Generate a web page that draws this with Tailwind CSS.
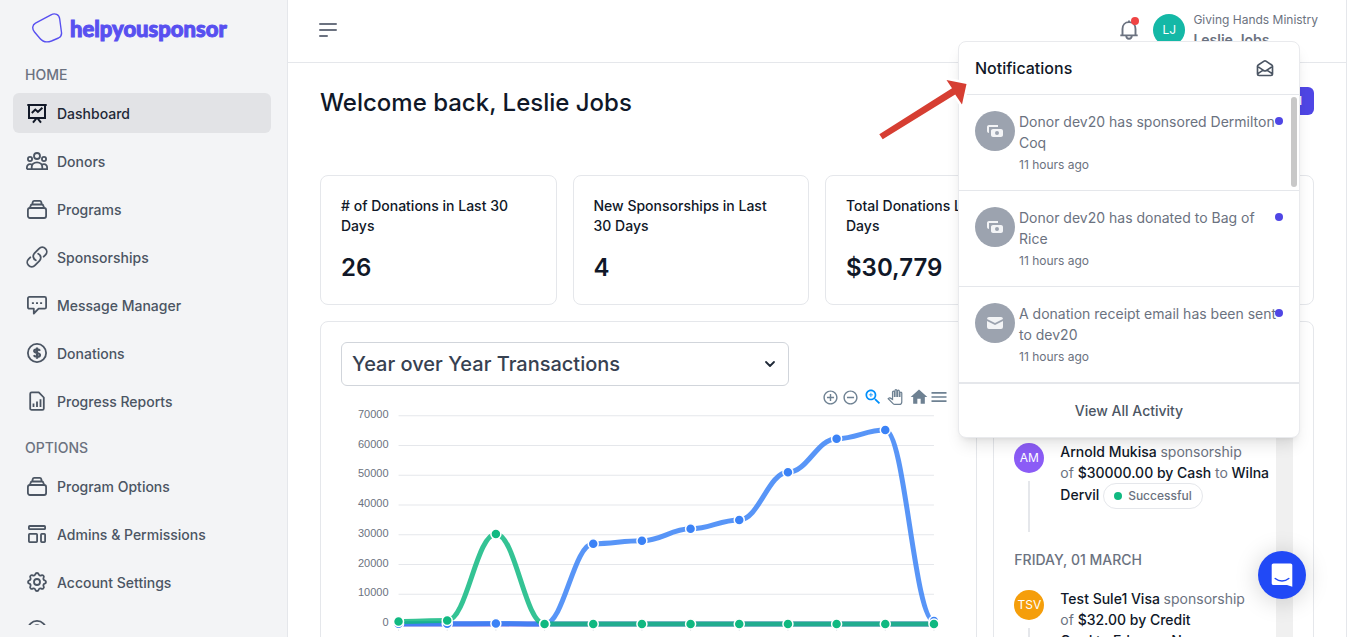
<!DOCTYPE html>
<html lang="en">
<head>
<meta charset="utf-8">
<title>Dashboard</title>
<meta name="viewport" content="width=device-width, initial-scale=1">
<script src="https://cdn.jsdelivr.net/npm/@tailwindcss/browser@4"></script>
</head>
<body class="flex h-screen overflow-hidden bg-white font-['Inter','Liberation_Sans',sans-serif] text-sm text-gray-900">

<!-- Sidebar -->
<aside class="flex h-screen w-72 shrink-0 flex-col border-r border-[#e5e7eb] bg-[#f3f4f6] pb-3 text-[#4b5563]">
  <a href="#" class="flex items-center gap-1.5 pt-3 pl-8 text-[#5850f0]">
    <svg class="h-8 w-8" viewBox="0 0 32 32" fill="none" stroke="currentColor" stroke-width="1.4"><path d="M3.500 11.200 L19 2.800 C23 .700 27.200 2.500 27.700 7 L29.500 20.500 C29.900 23.500 28.800 24.800 26.500 26 L19.500 29 C15 30.600 10.500 29.600 8 26.500 L2.500 20 C-.200 16.700 .300 13 3.500 11.200Z"/></svg>
    <span class="pt-0.5 font-['Lato','Liberation_Sans',sans-serif] text-[22px] leading-[30px] font-black [-webkit-text-stroke:1px_#5850f0]">helpyousponsor</span>
  </a>
  <nav class="mt-[21px] min-h-0 flex-1 overflow-hidden pr-4 pl-[13px] font-medium">
    <h2 class="mb-2 pl-3 leading-5 text-[#6b7280]">HOME</h2>
    <ul class="flex flex-col gap-2">
      <li><a href="#" class="flex h-10 items-center gap-2 rounded-md bg-[#e2e3e6] pt-0.5 pl-3 text-[#1f2937]">
        <svg class="size-6 text-[#111827]" viewBox="0 0 24 24" fill="none" stroke="currentColor" stroke-width="2"><path d="M2.300 3h19.400M4 3v13h16V3M8 20.600l3.200-4M16 20.600l-3.200-4M6.800 11l3.500-3.400 2.600 2.300 4.500-4.200"/></svg>
        Dashboard</a></li>
      <li><a href="#" class="flex h-10 items-center gap-2 pt-0.5 pl-3">
        <svg class="size-6" viewBox="0 0 24 24" fill="none" stroke="currentColor" stroke-width="1.800"><circle cx="12" cy="6" r="3"/><circle cx="5" cy="9" r="2.100"/><circle cx="19" cy="9" r="2.100"/><path d="M1.900 19.200h20.200v-1.700c0-2-1.300-3.300-3.100-3.300-.900 0-1.700.300-2.300.800M1.900 19.200v-1.700c0-2 1.300-3.300 3.100-3.300.900 0 1.700.300 2.300.800M6.700 19.200v-2.200c0-2.700 2.200-4.700 5.300-4.700s5.300 2 5.300 4.700v2.200"/></svg>
        Donors</a></li>
      <li><a href="#" class="flex h-10 items-center gap-2 pt-0.5 pl-3">
        <svg class="size-6" viewBox="0 0 24 24" fill="none" stroke="currentColor" stroke-width="1.800" stroke-linejoin="round"><rect x="2.900" y="10" width="18.200" height="10" rx="2"/><path d="M4.900 10l.700-2.300c.200-.800.800-1.200 1.500-1.200h9.800c.700 0 1.300.400 1.500 1.200l.700 2.300M7.200 6.500l.500-2.300c.2-.900.700-1.300 1.500-1.300h5.600c.8 0 1.300.400 1.500 1.300l.5 2.300"/></svg>
        Programs</a></li>
      <li><a href="#" class="flex h-10 items-center gap-2 pt-0.5 pl-3">
        <svg class="size-6" viewBox="0 0 24 24" fill="none" stroke="currentColor" stroke-width="1.800" stroke-linecap="round" stroke-linejoin="round"><path transform="translate(0 -1)" d="M13.190 8.688a4.500 4.500 0 0 1 1.242 7.244l-4.500 4.500a4.500 4.500 0 0 1-6.364-6.364l1.757-1.757m13.350-.622 1.757-1.757a4.500 4.500 0 0 0-6.364-6.364l-4.500 4.500a4.500 4.500 0 0 0 1.242 7.244"/></svg>
        Sponsorships</a></li>
      <li><a href="#" class="flex h-10 items-center gap-2 pt-0.5 pl-3">
        <svg class="size-6" viewBox="0 0 24 24" fill="none" stroke="currentColor" stroke-width="1.800" stroke-linejoin="round"><path d="M4.400 2.900h15.200c.9 0 1.500.6 1.500 1.500v8.800c0 .9-.6 1.500-1.500 1.500h-6l-4.800 4.800v-4.800H4.400c-.9 0-1.500-.6-1.500-1.500V4.400c0-.9.600-1.500 1.500-1.500Z"/><path d="M6.900 9.200h2M11 9.200h2M15.100 9.200h2"/></svg>
        Message Manager</a></li>
      <li><a href="#" class="flex h-10 items-center gap-2 pt-0.5 pl-3">
        <svg class="size-6" viewBox="0 0 24 24" fill="none" stroke="currentColor" stroke-width="1.800"><circle cx="12" cy="11" r="9.100"/><path stroke-width="2.200" d="M15 8.700c-.5-.9-1.500-1.300-3-1.300-1.700 0-2.800.6-2.800 1.700 0 2.500 5.800 1.200 5.800 3.800 0 1.200-1.200 1.800-3 1.800-1.500 0-2.700-.5-3.200-1.500M12 5.400v11.300"/></svg>
        Donations</a></li>
      <li><a href="#" class="flex h-10 items-center gap-2 pt-0.5 pl-3">
        <svg class="size-6" viewBox="0 0 24 24" fill="none" stroke="currentColor" stroke-width="1.800" stroke-linejoin="round"><path d="M6.700 2.300h7.100l5 5.200v10.900c0 .9-.6 1.500-1.500 1.500H6.700c-.9 0-1.500-.6-1.500-1.500V3.800c0-.9.600-1.500 1.500-1.500Z"/><path d="M8.500 13.500v3.400M12 11.600v5.300M15.500 9.300v7.600"/></svg>
        Progress Reports</a></li>
    </ul>
    <h2 class="mt-[17px] mb-2 pl-3 leading-5 text-[#6b7280]">OPTIONS</h2>
    <ul class="flex flex-col gap-2">
      <li><a href="#" class="flex h-10 items-center gap-2 pt-0.5 pl-3">
        <svg class="size-6" viewBox="0 0 24 24" fill="none" stroke="currentColor" stroke-width="1.800" stroke-linejoin="round"><rect x="2.900" y="10" width="18.200" height="10" rx="2"/><path d="M4.900 10l.700-2.300c.200-.800.800-1.200 1.500-1.200h9.800c.700 0 1.300.400 1.500 1.200l.700 2.300M7.200 6.500l.500-2.300c.2-.900.700-1.300 1.500-1.300h5.600c.8 0 1.300.400 1.500 1.300l.5 2.300"/></svg>
        Program Options</a></li>
      <li><a href="#" class="flex h-10 items-center gap-2 pt-0.5 pl-3">
        <svg class="size-6" viewBox="0 0 24 24" fill="none" stroke="currentColor" stroke-width="1.800"><rect x="3.900" y="3" width="16.200" height="3.200" rx=".8"/><rect x="3.900" y="10.900" width="8.200" height="8.200" rx=".8"/><rect x="16" y="10.900" width="4.100" height="8.200" rx=".8"/></svg>
        Admins &amp; Permissions</a></li>
      <li><a href="#" class="flex h-10 items-center gap-2 pt-0.5 pl-3">
        <svg class="size-6" viewBox="0 0 24 24" fill="none" stroke="currentColor" stroke-width="1.800" stroke-linejoin="round"><g transform="translate(0 -1)"><path d="M10.325 4.317c.426-1.756 2.924-1.756 3.350 0a1.724 1.724 0 002.573 1.066c1.543-.94 3.310.826 2.370 2.370a1.724 1.724 0 001.065 2.572c1.756.426 1.756 2.924 0 3.350a1.724 1.724 0 00-1.066 2.573c.94 1.543-.826 3.310-2.370 2.370a1.724 1.724 0 00-2.572 1.065c-.426 1.756-2.924 1.756-3.350 0a1.724 1.724 0 00-2.573-1.066c-1.543.94-3.310-.826-2.370-2.370a1.724 1.724 0 00-1.065-2.572c-1.756-.426-1.756-2.924 0-3.350a1.724 1.724 0 001.066-2.573c-.94-1.543.826-3.310 2.370-2.370.996.608 2.296.07 2.572-1.065z"/><circle cx="12" cy="12" r="3"/></g></svg>
        Account Settings</a></li>
      <li><a href="#" class="flex h-10 items-center gap-2 pt-0.5 pl-3">
        <svg class="size-6" viewBox="0 0 24 24" fill="none" stroke="currentColor" stroke-width="1.800"><circle cx="12" cy="11" r="9.100"/><path d="M9.500 8.500c0-3.300 5-3.300 5 0 0 1.700-2.500 1.800-2.500 3.800M12 14v2"/></svg></a></li>
    </ul>
  </nav>
</aside>

<!-- Page -->
<div class="relative min-w-0 flex-1 border-r border-[#e5e7eb]">
  <header class="flex h-[63px] items-center justify-between border-b border-[#e5e7eb] px-7 pb-[3px]">
    <button type="button" aria-label="Menu" class="text-[#6b7280]">
      <svg class="size-6" viewBox="0 0 24 24" fill="none" stroke="currentColor" stroke-width="2" stroke-linecap="round"><path d="M4 6h16M4 12h16M4 18h7"/></svg>
    </button>
    <div class="flex items-center gap-2">
      <button type="button" aria-label="Notifications" class="relative mr-1 text-[#6b7280]">
        <svg class="size-6" viewBox="0 0 24 24" fill="none" stroke="currentColor" stroke-width="1.900" stroke-linejoin="round"><path d="M3.300 17.400h17.400M5.500 17.400V11c0-3.900 2.600-6.900 6.500-6.900s6.500 3 6.500 6.900v6.400M9.200 17.600c0 2 1.200 3.200 2.800 3.200s2.800-1.200 2.800-3.200M12 4V2.600"/></svg>
        <span class="absolute -top-px right-0.5 size-2 rounded-full bg-[#ef4444]"></span>
      </button>
      <span class="flex size-8 items-center justify-center rounded-full bg-[#14b8a6] text-xs text-white">LJ</span>
      <div class="text-[#6b7280]">
        <p class="text-xs leading-5">Giving Hands Ministry</p>
        <p class="leading-[19px] font-semibold">Leslie Jobs</p>
      </div>
    </div>
  </header>

  <main class="px-8 pt-6">
    <div class="flex items-start justify-between">
      <h1 class="text-2xl leading-8 font-medium">Welcome back, Leslie Jobs</h1>
      <button type="button" class="h-7 w-24 rounded-md bg-[#4f46e5] pr-3 text-right text-xs font-medium text-white">l</button>
    </div>

    <section class="mt-14 grid grid-cols-4 gap-4">
      <div class="rounded-lg border border-[#e5e7eb] p-5">
        <p class="leading-5 font-medium"># of Donations in Last 30 Days</p>
        <p class="mt-4 text-2xl leading-8 font-semibold">26</p>
      </div>
      <div class="rounded-lg border border-[#e5e7eb] p-5">
        <p class="leading-5 font-medium">New Sponsorships in Last 30 Days</p>
        <p class="mt-4 text-2xl leading-8 font-semibold">4</p>
      </div>
      <div class="rounded-lg border border-[#e5e7eb] p-5">
        <p class="leading-5 font-medium">Total Donations Last 30 Days</p>
        <p class="mt-4 text-2xl leading-8 font-semibold">$30,779</p>
      </div>
      <div class="rounded-lg border border-[#e5e7eb] p-5"></div>
    </section>

    <section class="mt-4 grid grid-cols-3 gap-4">
      <div class="col-span-2 rounded-t-lg border border-[#e5e7eb] p-5">
        <div class="relative max-w-md">
          <select aria-label="Chart" class="h-11 w-full appearance-none rounded-md border border-[#d1d5db] bg-white px-2.5 text-xl font-medium text-[#374151]">
            <option>Year over Year Transactions</option>
          </select>
          <svg class="pointer-events-none absolute top-3.5 right-[11px] size-4" viewBox="0 0 16 16" fill="none" stroke="#1f2937" stroke-width="1.800" stroke-linecap="round" stroke-linejoin="round"><path d="M4 6l4 4L12 6"/></svg>
        </div>
        <div class="flex h-6 items-center justify-end pr-[7px] pb-0.5 text-[#6e8192]">
          <button type="button" aria-label="Zoom in" class="flex w-5 justify-center"><svg class="size-[17px]" viewBox="0 0 24 24" fill="currentColor"><path d="M13 7h-2v4H7v2h4v4h2v-4h4v-2h-4V7zm-1-5C6.480 2 2 6.480 2 12s4.480 10 10 10 10-4.480 10-10S17.520 2 12 2zm0 18c-4.410 0-8-3.590-8-8s3.590-8 8-8 8 3.590 8 8-3.590 8-8 8z"/></svg></button>
          <button type="button" aria-label="Zoom out" class="flex w-5 justify-center"><svg class="size-[17px]" viewBox="0 0 24 24" fill="currentColor"><path d="M7 11v2h10v-2H7zm5-9C6.480 2 2 6.480 2 12s4.480 10 10 10 10-4.480 10-10S17.520 2 12 2zm0 18c-4.410 0-8-3.590-8-8s3.590-8 8-8 8 3.590 8 8-3.590 8-8 8z"/></svg></button>
          <button type="button" aria-label="Selection zoom" class="ml-[3px] flex w-5 justify-center text-[#008ffb]"><svg class="size-5" viewBox="0 0 24 24" fill="currentColor"><path d="M15.500 14h-.79l-.28-.27C15.410 12.590 16 11.110 16 9.500 16 5.910 13.090 3 9.500 3S3 5.910 3 9.500 5.910 16 9.500 16c1.610 0 3.090-.59 4.230-1.570l.27.28v.79l5 4.990L20.490 19l-4.990-5zm-6 0C7.010 14 5 11.990 5 9.500S7.010 5 9.500 5 14 7.010 14 9.500 11.990 14 9.500 14z"/><path d="M12 10h-2v2H9v-2H7V9h2V7h1v2h2v1z"/></svg></button>
          <button type="button" aria-label="Pan" class="ml-0.5 flex w-5 justify-center"><svg class="size-4" viewBox="-1 -1 26 26" fill="#fefefe" stroke="currentColor" stroke-width="2"><path d="M23 5.500V20c0 2.200-1.800 4-4 4h-7.300c-1.080 0-2.100-.43-2.850-1.190L1 14.830s1.260-1.230 1.300-1.250c.22-.19.490-.29.790-.29.220 0 .42.060.6.160.04.010 4.310 2.460 4.310 2.460V4c0-.83.670-1.500 1.500-1.500S11 3.170 11 4v7h1V1.500c0-.83.670-1.500 1.500-1.500S15 .67 15 1.500V11h1V2.500c0-.83.670-1.500 1.500-1.500s1.500.67 1.500 1.500V11h1V5.500c0-.83.670-1.500 1.500-1.500s1.500.67 1.500 1.500z"/></svg></button>
          <button type="button" aria-label="Reset zoom" class="ml-1 flex w-5 justify-center"><svg class="size-5" viewBox="0 0 24 24" fill="currentColor"><path d="M10 20v-6h4v6h5v-8h3L12 3 2 12h3v8z"/></svg></button>
          <button type="button" aria-label="Chart menu" class="flex w-5 justify-center"><svg class="size-5" viewBox="0 0 24 24" fill="currentColor"><path d="M3 18h18v-2H3v2zm0-5h18v-2H3v2zm0-7v2h18V6H3z"/></svg></button>
        </div>
        <svg id="chart" class="block w-full overflow-visible" viewBox="0 0 615 260" fill="none"></svg>
      </div>

      <!-- Recent activity -->
      <div class="flex rounded-t-lg border border-[#e5e7eb] px-5">
        <div class="min-w-0 flex-1 pt-[119px]">
          <div class="flex gap-4">
            <div class="flex w-[30px] shrink-0 flex-col items-center gap-2">
              <span class="mt-0.5 flex size-[30px] items-center justify-center rounded-full bg-[#8b5cf6] text-xs text-white">AM</span>
              <span class="h-[51px] w-0.5 bg-[#e5e7eb]"></span>
            </div>
            <p class="leading-[21px] font-medium whitespace-nowrap">Arnold Mukisa <span class="font-normal text-[#6b7280]">sponsorship</span><br><span class="font-normal text-[#6b7280]">of</span> $30000.00 by Cash <span class="font-normal text-[#6b7280]">to</span> Wilna<br>Dervil <span class="inline-flex h-[26px] items-center gap-1.5 rounded-full border border-[#e5e7eb] px-2.5 align-middle text-xs text-[#6b7280]"><span class="size-2 rounded-full bg-[#10b981]"></span>Successful</span></p>
          </div>
          <h3 class="mt-[18px] leading-5 font-medium text-[#6b7280]">FRIDAY, 01 MARCH</h3>
          <div class="mt-[18px] flex gap-4">
            <div class="flex w-[30px] shrink-0 flex-col items-center gap-2">
              <span class="mt-0.5 flex size-[30px] items-center justify-center rounded-full bg-[#f59e0b] text-xs text-white">TSV</span>
              <span class="h-[51px] w-0.5 bg-[#e5e7eb]"></span>
            </div>
            <p class="leading-[21px] font-medium whitespace-nowrap">Test Sule1 Visa <span class="font-normal text-[#6b7280]">sponsorship</span><br><span class="font-normal text-[#6b7280]">of</span> $32.00 by Credit<br>Card to Edgaras N</p>
          </div>
        </div>
        <div class="w-[17px] shrink-0 bg-[#f0f0f0]"></div>
      </div>
    </section>
  </main>

  <!-- Notifications menu -->
  <section class="absolute top-[41px] right-[46px] w-[342px] rounded-lg border border-[#e9eaed] bg-white text-[#6b7280] shadow-lg">
    <div class="flex h-[53px] items-center justify-between border-b border-[#e5e7eb] px-4 pr-6">
      <h2 class="text-base font-medium text-[#111827]">Notifications</h2>
      <button type="button" aria-label="Mark all as read" class="text-[#4b5563]">
        <svg class="size-5" viewBox="0 0 24 24" fill="none" stroke="currentColor" stroke-width="2" stroke-linecap="round" stroke-linejoin="round"><path d="M3 19v-8.930a2 2 0 01.890-1.664l7-4.666a2 2 0 012.220 0l7 4.666A2 2 0 0121 10.070V19M3 19a2 2 0 002 2h14a2 2 0 002-2M3 19l6.750-4.500M21 19l-6.750-4.500M3 10l6.750 4.500M21 10l-6.750 4.500m0 0l-1.140.760a2 2 0 01-2.220 0l-1.140-.760"/></svg>
      </button>
    </div>
    <div class="relative">
      <ul class="divide-y divide-[#e5e7eb] border-b-2 border-[#e5e7eb]">
        <li class="relative flex gap-1 pt-4 pr-3 pb-[15px] pl-4">
          <span class="flex size-10 shrink-0 items-center justify-center rounded-full bg-[#9ca3af] text-[#f3f4f6]"><svg class="size-5" viewBox="0 0 20 20" fill="currentColor"><path fill-rule="evenodd" d="M2 6c0-1.100.9-2 2-2h9v2H4v6c-1.100 0-2-.9-2-2V6Zm4 4c0-1.100.9-2 2-2h8c1.100 0 2 .9 2 2v4c0 1.100-.9 2-2 2H8c-1.100 0-2-.9-2-2v-4Zm6 4a2 2 0 1 0 0-4 2 2 0 0 0 0 4Z"/></svg></span>
          <div class="leading-[21px]"><p class="whitespace-nowrap">Donor dev20 has sponsored Dermilton<br>Coq</p><p class="mt-px text-xs leading-[21px]">11 hours ago</p></div>
          <span class="absolute top-[22px] right-4 size-2 rounded-full bg-[#4f46e5]"></span>
        </li>
        <li class="relative flex gap-1 pt-4 pr-3 pb-[15px] pl-4">
          <span class="flex size-10 shrink-0 items-center justify-center rounded-full bg-[#9ca3af] text-[#f3f4f6]"><svg class="size-5" viewBox="0 0 20 20" fill="currentColor"><path fill-rule="evenodd" d="M2 6c0-1.100.9-2 2-2h9v2H4v6c-1.100 0-2-.9-2-2V6Zm4 4c0-1.100.9-2 2-2h8c1.100 0 2 .9 2 2v4c0 1.100-.9 2-2 2H8c-1.100 0-2-.9-2-2v-4Zm6 4a2 2 0 1 0 0-4 2 2 0 0 0 0 4Z"/></svg></span>
          <div class="leading-[21px]"><p class="whitespace-nowrap">Donor dev20 has donated to Bag of<br>Rice</p><p class="mt-px text-xs leading-[21px]">11 hours ago</p></div>
          <span class="absolute top-[22px] right-4 size-2 rounded-full bg-[#4f46e5]"></span>
        </li>
        <li class="relative flex gap-1 pt-4 pr-3 pb-[15px] pl-4">
          <span class="flex size-10 shrink-0 items-center justify-center rounded-full bg-[#9ca3af] text-[#f3f4f6]"><svg class="size-5" viewBox="0 0 20 20" fill="currentColor"><path d="M2 5.900A2 2 0 0 1 4 4h12a2 2 0 0 1 2 1.900l-8 4-8-4Z"/><path d="M18 8.100l-8 4-8-4V14a2 2 0 0 0 2 2h12a2 2 0 0 0 2-2V8.100Z"/></svg></span>
          <div class="leading-[21px]"><p class="whitespace-nowrap">A donation receipt email has been sent<br>to dev20</p><p class="mt-px text-xs leading-[21px]">11 hours ago</p></div>
          <span class="absolute top-[22px] right-4 size-2 rounded-full bg-[#4f46e5]"></span>
        </li>
      </ul>
      <div class="absolute top-0.5 right-0.5 h-[90px] w-1.5 rounded-full bg-[#c8c8c8]"></div>
    </div>
    <a href="#" class="flex h-[53px] items-center justify-center font-medium text-[#4b5563]">View All Activity</a>
  </section>

  <!-- Pointer arrow -->
  <svg class="absolute top-[70px] left-[582px] h-[80px] w-[110px]" viewBox="870 70 110 80"><path d="M879.300 134.300L952 88.300L946.500 80L966.500 84L962 104.500L955.200 94.500L882.700 139.300Z" fill="#d63e32" stroke="#fff" stroke-width="5" paint-order="stroke"/></svg>
</div>

<!-- Chat launcher -->
<button type="button" aria-label="Open chat" class="fixed right-[41px] bottom-[38px] flex size-12 items-center justify-center rounded-full bg-[#2149f6] shadow-[0_2px_24px_rgba(0,0,0,0.18)]">
  <svg class="size-6" viewBox="0 0 24 24"><path d="M3.500.5h17c1 0 1.800.8 1.800 1.800v21.500l-5.300-1.700H3.500c-1 0-1.800-.8-1.800-1.800v-18c0-1 .8-1.800 1.800-1.800Z" fill="#fff"/><path d="M5.200 15.500c4 3.300 9.600 3.300 13.600 0" fill="none" stroke="#2149f6" stroke-width="1.500" stroke-linecap="round"/></svg>
</button>

<script>
  const svg = document.getElementById('chart');
  const left = 57.5, step = 48.65, base = 214, unit = 29.75 / 10000;
  const x = i => left + step * i;
  const y = v => base - v * unit;
  let out = '';
  for (let t = 0; t <= 7; t++) {
    const gy = y(t * 10000);
    out += `<line x1="${left}" x2="${x(11)}" y1="${gy}" y2="${gy}" stroke="#e5e7eb"/>`;
    out += `<text x="47.500" y="${gy + 2}" text-anchor="end" font-size="11" font-family="Liberation Sans, sans-serif" fill="#6b7280">${t * 10000}</text>`;
  }
  for (let i = 0; i < 12; i++) out += `<line x1="${x(i)}" x2="${x(i)}" y1="${base}" y2="${base + 7}" stroke="#e5e7eb"/>`;
  const series = [
    { color: '#6d4fd8', data: [0, 0, 0, 0, 0, 0, 0, 0, 0, 0, 0, 0] },
    { color: '#3b82f6', data: [100, 100, 200, 0, 27000, 28000, 32000, 35000, 51000, 62300, 65200, 1000] },
    { color: '#10b981', data: [900, 1200, 30300, 0, 0, 0, 0, 0, 0, 0, 0, 0] }
  ];
  const k = step * 0.4;
  for (const s of series) {
    let d = `M${x(0)} ${y(s.data[0])}`;
    for (let i = 1; i < s.data.length; i++)
      d += `C${x(i - 1) + k} ${y(s.data[i - 1])} ${x(i) - k} ${y(s.data[i])} ${x(i)} ${y(s.data[i])}`;
    out += `<path d="${d}" stroke="${s.color}" stroke-opacity=".85" stroke-width="5"/>`;
  }
  for (const s of series.slice(1))
    s.data.forEach((v, i) => out += `<circle cx="${x(i)}" cy="${y(v)}" r="5" fill="${s.color}" stroke="#fff" stroke-width="1.500"/>`);
  svg.innerHTML = out;
</script>
</body>
</html>
